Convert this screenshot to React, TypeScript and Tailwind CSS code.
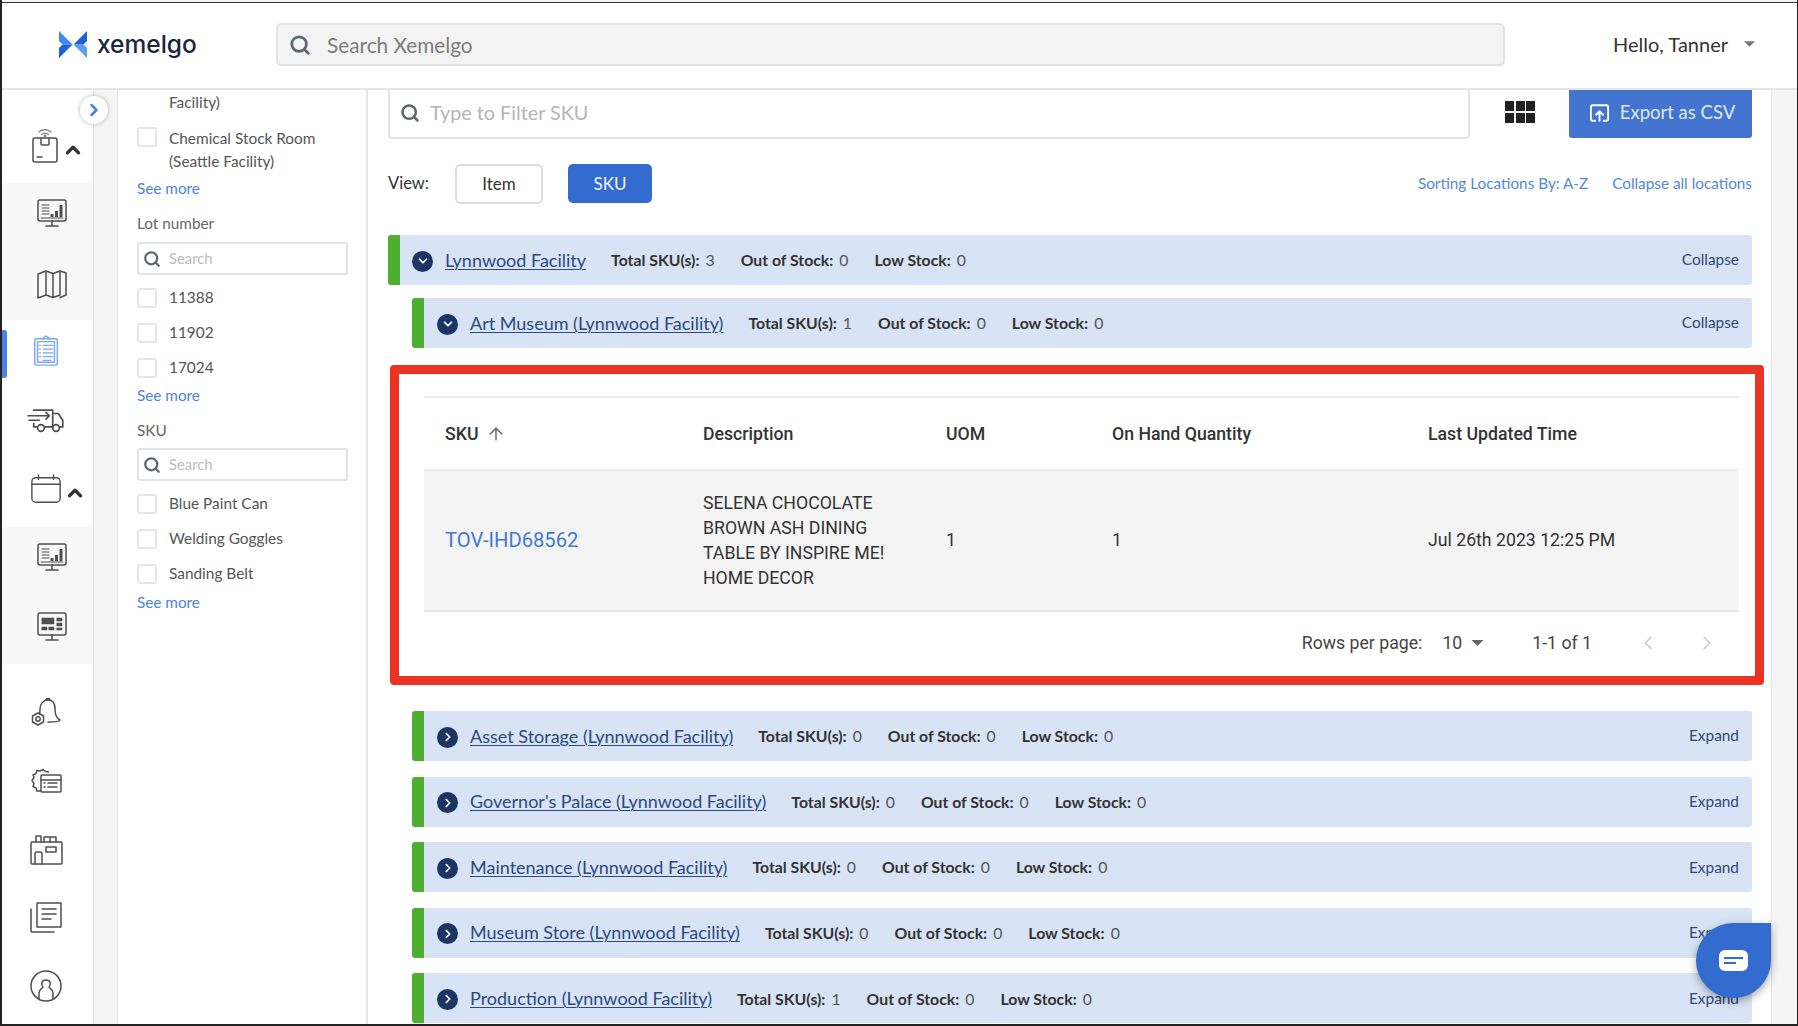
import React from 'react'
import { Search, ChevronRight, ChevronLeft, ChevronDown, ChevronUp, ArrowUp } from 'lucide-react'

const lato = { fontFamily: 'Lato, sans-serif' }

const Caret = ({ className }: { className: string }) => (
  <svg viewBox="0 0 10 5" className={className} fill="currentColor">
    <path d="M0 0h10L5 5z" />
  </svg>
)

const Logo = () => (
  <svg viewBox="0 0 28 27" className="w-[28px] h-[27px]">
    <path d="M0 0l13.5 13.5H3.5L0 10z" fill="#3f86ee" />
    <path d="M0 27l13.5-13.5H3.5L0 17z" fill="#1f5fd8" />
    <path d="M28 0L14.5 13.5H24.5L28 10z" fill="#1f5fd8" />
    <path d="M28 27L14.5 13.5H24.5L28 17z" fill="#5a9bf5" />
  </svg>
)

const Icon = ({ children, className = 'w-[34px] h-[34px]', color = '#4f4f4f' }: { children: React.ReactNode; className?: string; color?: string }) => (
  <svg viewBox="0 0 34 34" className={className} fill="none" stroke={color} strokeWidth={1.5} strokeLinecap="round" strokeLinejoin="round">
    {children}
  </svg>
)

const MonitorChart = () => (
  <Icon>
    <rect x="3" y="4" width="28" height="21" rx="2" />
    <path d="M17 25v4M11 30h12" />
    <path d="M7 9h7M7 12h7M7 15h7M7 18h7" strokeWidth={1} />
    <path d="M17 21v-3M21.5 21v-6M26 21V9" strokeWidth={3} strokeLinecap="butt" />
    <path d="M6 22h22" strokeWidth={1} />
  </Icon>
)

const MonitorBoard = () => (
  <Icon>
    <rect x="3" y="3" width="28" height="22" rx="2" />
    <path d="M17 25v4M11 30h12" />
    <path d="M7 8h12v6H7zM22 8h5v3h-5zM22 13h5v3h-5zM7 17h5v3H7zM14 17h5v3h-5zM22 18h5v2h-5z" fill="#4f4f4f" strokeWidth={0.5} />
  </Icon>
)

const SidebarRow = ({ children, className = '' }: { children: React.ReactNode; className?: string }) => (
  <div className={`h-[68px] flex items-center justify-center ${className}`}>{children}</div>
)

const GraySection = ({ children }: { children: React.ReactNode }) => (
  <div className="bg-[#f8f8f8] h-[137px] pl-[8px] pt-[1px] flex flex-col">
    <div className="mt-[-6px]">{children}</div>
  </div>
)

const Sidebar = () => (
  <div className="w-[91px] shrink-0 bg-white flex flex-col">
    <div className="h-[93px] flex items-end pb-[19px] pl-[28px] gap-[2px]">
      <svg viewBox="0 0 30 36" className="w-[30px] h-[36px]" fill="none" stroke="#4f4f4f" strokeWidth={1.5} strokeLinejoin="round" strokeLinecap="round">
        <path d="M9 4c3.5-3 8.5-3 12 0M11.5 6.5c2-1.5 5-1.5 7 0" stroke="#8a8a8a" />
        <circle cx="15" cy="8" r="0.8" fill="#8a8a8a" stroke="#8a8a8a" />
        <rect x="3" y="10" width="24" height="24" rx="2" />
        <path d="M11 10v6a1 1 0 001 1h6a1 1 0 001-1v-6M7 29h5" />
      </svg>
      <ChevronUp className="w-[22px] h-[22px] mb-[3px] text-[#333]" strokeWidth={3.5} />
    </div>
    <GraySection>
      <SidebarRow className="h-[70px]"><MonitorChart /></SidebarRow>
      <SidebarRow className="h-[70px]">
        <Icon>
          <path d="M3 8l8-3v24l-8 3zM11 5l7 2.5v24L11 29zM18 7.5L25 5v24l-7 2.5zM25 5l6 2v22l-6 2.5" />
        </Icon>
      </SidebarRow>
    </GraySection>
    <SidebarRow className="relative h-[66px] pr-[4px] pb-[6px]">
      <div className="absolute left-0 top-[10px] w-[5px] h-[48px] bg-[#4a80ea] rounded-r-[3px]" />
      <Icon className="w-[32px] h-[36px]" color="#7ba6f3">
        <rect x="5" y="4" width="24" height="28" rx="1.5" />
        <rect x="8" y="7" width="18" height="22" />
        <path d="M13 4l4-3 4 3M14 11h10M14 15h10M14 19h10M14 23h10M14 27h8M10 11h1M10 15h1M10 19h1M10 23h1" />
      </Icon>
    </SidebarRow>
    <SidebarRow className="pr-[4px] pb-[8px]">
      <Icon className="w-[38px] h-[38px]">
        <path d="M6 10h17v15H16M23 13h5l4 6v6h-3M23 25h-0" />
        <circle cx="12.5" cy="26" r="3" />
        <circle cx="26" cy="26" r="3" />
        <path d="M1 15h19M17 12l3 3-3 3M2 19h9M6 22v3h3" />
      </Icon>
    </SidebarRow>
    <div className="h-[71px] flex items-center pl-[28px] pb-[4px]">
      <Icon className="w-[32px] h-[32px] mt-[-2px]">
        <rect x="2" y="5" width="30" height="26" rx="4" />
        <path d="M2 12h30M9 2v5M25 2v5" />
      </Icon>
      <ChevronUp className="w-[22px] h-[22px] ml-[2px] mt-[6px] text-[#333]" strokeWidth={3.5} />
    </div>
    <GraySection>
      <SidebarRow className="h-[70px]"><MonitorChart /></SidebarRow>
      <SidebarRow className="h-[70px]"><MonitorBoard /></SidebarRow>
    </GraySection>
    <div className="pt-[16px] pr-[4px]">
      <SidebarRow>
        <Icon>
          <path d="M19 3c-5 0-8 4-8 9 0 2 0 3-.5 5M19 3c5 0 7 4 7 9 0 6 1 9 5 11 0 2-8 2-12 2M17 3c0-2 4-2 4 0" />
          <path d="M9 16l5.5 3v6L9 28l-5.5-3v-6z" />
          <circle cx="9" cy="22" r="2.2" />
        </Icon>
      </SidebarRow>
      <SidebarRow>
        <Icon>
          <path d="M12 26H8l-1-3-3-1.5 1-3-2-3 2-3-1-2.5 3-1.5 1-3 3 .5 3-1.5 2.5 2 3 .5" />
          <rect x="12" y="10" width="20" height="17" rx="1" />
          <path d="M12 15h20M19 18h9M19 22h9M15 18h1M15 22h1" />
        </Icon>
      </SidebarRow>
      <SidebarRow>
        <Icon>
          <rect x="2" y="9" width="31" height="22" rx="1" />
          <path d="M7 9V3h5v6M15 9V4h6v5M21 4h6v5" />
          <path d="M6 31V21a2 2 0 012-2h3a2 2 0 012 2v10" />
          <rect x="17" y="14" width="10" height="5" />
        </Icon>
      </SidebarRow>
      <SidebarRow>
        <Icon>
          <rect x="8" y="2" width="24" height="24" />
          <path d="M13 8h14M13 13h14M13 18h9" />
          <path d="M2 8v22a1 1 0 001 1h22" />
        </Icon>
      </SidebarRow>
      <SidebarRow>
        <Icon>
          <circle cx="17" cy="17" r="15" />
          <path d="M10 30v-6c0-4 3-4 4-6-2-2-2-7 3-7s5 5 3 7c1 2 4 2 4 6v6" />
        </Icon>
      </SidebarRow>
    </div>
  </div>
)

const Check = ({ label, lines }: { label: string; lines?: string }) => (
  <div className={`flex gap-[12px] ${lines ? 'h-[50px] items-start' : 'h-[35px] items-center'}`}>
    <div className="w-[20px] h-[20px] shrink-0 border-2 border-[#e6e6e6] rounded-[3px] bg-white" />
    <div className="text-[15.4px] leading-[23px] text-[#555] whitespace-nowrap">
      {label}
      {lines && <div>{lines}</div>}
    </div>
  </div>
)

const SeeMore = () => <div className="text-[15.3px] leading-[22px] text-[#4c82e2]">See more</div>

const FilterSearch = () => (
  <div className="mt-[7px] mb-[5px] w-[211px] h-[33px] border-2 border-[#e3e3e3] rounded-[3px] flex items-center pl-[4px] gap-[8px]">
    <Search className="w-[18px] h-[18px] text-[#5d6770]" strokeWidth={3} />
    <span className="text-[14.8px] text-[#bbbbbb]">Search</span>
  </div>
)

const FilterPanel = () => (
  <div className="w-[250px] shrink-0 bg-white border-r-2 border-[#e6e6e6] pl-[19px] flex flex-col" style={lato}>
    <div className="pl-[32px] pt-[1px] h-[37px] text-[15.4px] leading-[23px] text-[#555]">Facility)</div>
    <Check label="Chemical Stock Room" lines="(Seattle Facility)" />
    <div><SeeMore /></div>
    <div className="mt-[13px] text-[15.3px] leading-[22px] text-[#666]">Lot number</div>
    <div className="mt-[1px]"><FilterSearch /></div>
    <Check label="11388" />
    <Check label="11902" />
    <Check label="17024" />
    <div className="mt-[-1px]"><SeeMore /></div>
    <div className="mt-[13px] text-[15.3px] leading-[22px] text-[#666]">SKU</div>
    <FilterSearch />
    <Check label="Blue Paint Can" />
    <Check label="Welding Goggles" />
    <Check label="Sanding Belt" />
    <div><SeeMore /></div>
  </div>
)

const Stat = ({ label, value }: { label: string; value: number }) => (
  <div className="flex items-center gap-[6px] text-[15.8px] text-[#333]">
    <span className="font-bold">{label}</span>
    <span className="text-[#555]">{value}</span>
  </div>
)

const LocationRow = ({
  name,
  total,
  open = false,
  nested = true,
  className = '',
}: {
  name: string
  total: number
  open?: boolean
  nested?: boolean
  className?: string
}) => (
  <div className={`h-[50px] flex rounded-[3px] overflow-hidden bg-[#d8e3f5] ${nested ? 'ml-[24px]' : ''} ${className}`} style={lato}>
    <div className="w-[12px] bg-[#4fae32] shrink-0" />
    <div className={`flex-1 flex items-center pr-[13px] ${nested ? 'pl-[13px]' : 'pl-[12px]'}`}>
      <div className="w-[21px] h-[21px] rounded-full bg-[#1d3565] flex items-center justify-center shrink-0 mt-[2px]">
        {open ? (
          <ChevronDown className="w-[14px] h-[14px] text-white" strokeWidth={3} />
        ) : (
          <ChevronRight className="w-[14px] h-[14px] text-white" strokeWidth={3} />
        )}
      </div>
      <a className="ml-[12px] text-[18px] text-[#2a4a80] underline underline-offset-2 decoration-1">{name}</a>
      <div className="ml-[25px] flex items-center gap-[26px]">
        <Stat label="Total SKU(s):" value={total} />
        <Stat label="Out of Stock:" value={0} />
        <Stat label="Low Stock:" value={0} />
      </div>
      <div className="ml-auto text-[15.4px] text-[#2f4a78]">{open ? 'Collapse' : 'Expand'}</div>
    </div>
  </div>
)

const SkuTable = () => (
  <div className="mt-[17px] ml-[2px] mr-[-12px] h-[320px] border-[9px] border-[#ec3323] rounded-[4px] pt-[22px] pl-[25px] pr-[16px] bg-white" style={{ fontFamily: 'Roboto, sans-serif' }}>
    <div className="border-t-2 border-[#ececec]">
      <div className="h-[73px] pt-[2px] grid grid-cols-[258px_243px_166px_316px_1fr] pl-[21px] items-center border-b-2 border-[#ececec] text-[17.7px] font-medium text-[#333]">
        <div className="flex items-center gap-[8px]">
          SKU <ArrowUp className="w-[20px] h-[20px] text-[#666]" strokeWidth={1.75} />
        </div>
        <div>Description</div>
        <div>UOM</div>
        <div>On Hand Quantity</div>
        <div>Last Updated Time</div>
      </div>
      <div className="h-[141px] grid grid-cols-[258px_243px_166px_316px_1fr] pl-[21px] items-center bg-[#f4f4f4] border-b-2 border-[#e8e8e8] text-[17.7px] text-[#333]">
        <div className="text-[20.2px] text-[#3f78d6]">TOV-IHD68562</div>
        <div className="leading-[25px] w-[190px]">SELENA CHOCOLATE BROWN ASH DINING TABLE BY INSPIRE ME! HOME DECOR</div>
        <div>1</div>
        <div>1</div>
        <div>Jul 26th 2023 12:25 PM</div>
      </div>
      <div className="h-[63px] flex items-center text-[17.7px] text-[#444]">
        <div className="ml-auto flex items-center">
          <span>Rows per page:</span>
          <span className="ml-[20px]">10</span>
          <Caret className="ml-[9px] w-[13px] h-[6px] text-[#666]" />
          <span className="ml-[48px]">1-1 of 1</span>
          <ChevronLeft className="ml-[45px] w-[22px] h-[22px] text-[#c8c8c8]" strokeWidth={1.75} />
          <ChevronRight className="ml-[37px] mr-[21px] w-[22px] h-[22px] text-[#c8c8c8]" strokeWidth={1.75} />
        </div>
      </div>
    </div>
  </div>
)

const Main = () => (
  <div className="flex-1 min-w-0 bg-white pl-[20px] pr-[19px]" style={lato}>
    <div className="flex items-start">
      <div className="w-[1082px] h-[49px] pb-[2px] border-2 border-t-0 border-[#e4e4e4] rounded-b-[4px] flex items-center pl-[10px] gap-[10px]">
        <Search className="w-[20px] h-[20px] text-[#5d6770]" strokeWidth={3} />
        <span className="text-[19.8px] text-[#b5b5b5]">Type to Filter SKU</span>
      </div>
      <div className="ml-[35px] mt-[11px] w-[30px] h-[22px] grid grid-cols-3 grid-rows-2 gap-[1.5px]">
        {[0, 1, 2, 3, 4, 5].map((i) => (
          <div key={i} className="bg-[#222]" />
        ))}
      </div>
      <div className="ml-auto w-[183px] h-[48px] pl-[4px] pb-[2px] bg-[#4274d0] rounded-b-[3px] flex items-center justify-center gap-[11px] text-white text-[18.5px]">
        <svg viewBox="0 0 22 20" className="w-[19px] h-[18px]" fill="none" stroke="#fff" strokeWidth={2.2} strokeLinecap="round" strokeLinejoin="round">
          <path d="M6 19H3a2 2 0 01-2-2V3a2 2 0 012-2h16a2 2 0 012 2v14a2 2 0 01-2 2h-3" />
          <path d="M11 19V9M7 12l4-4 4 4" />
        </svg>
        <span className="text-[#dfe8f9]">Export as CSV</span>
      </div>
    </div>
    <div className="mt-[24.5px] h-[40px] flex items-center">
      <span className="w-[67px] text-[16.5px] text-[#333]">View:</span>
      <div className="w-[88px] h-[40px] border-2 border-[#dcdcdc] rounded-[6px] flex items-center justify-center text-[17px] text-[#333]">Item</div>
      <div className="ml-[25px] w-[84px] h-[39px] bg-[#346bcf] rounded-[5px] flex items-center justify-center text-[17px] text-[#f2f5fc]">SKU</div>
      <div className="ml-auto flex gap-[24px] text-[15.3px] text-[#5488d8]">
        <span>Sorting Locations By: A-Z</span>
        <span>Collapse all locations</span>
      </div>
    </div>
    <LocationRow className="mt-[31.5px]" name="Lynnwood Facility" total={3} open nested={false} />
    <LocationRow className="mt-[13px]" name="Art Museum (Lynnwood Facility)" total={1} open />
    <SkuTable />
    <LocationRow className="mt-[26px]" name="Asset Storage (Lynnwood Facility)" total={0} />
    <LocationRow className="mt-[15.6px]" name="Governor's Palace (Lynnwood Facility)" total={0} />
    <LocationRow className="mt-[15.6px]" name="Maintenance (Lynnwood Facility)" total={0} />
    <LocationRow className="mt-[15.6px]" name="Museum Store (Lynnwood Facility)" total={0} />
    <LocationRow className="mt-[15.6px]" name="Production (Lynnwood Facility)" total={1} />
  </div>
)

const App = () => {
  return (
    <div className="relative w-[1798px] h-[1026px] overflow-hidden bg-white flex flex-col border-l-2 border-r border-[#222]" style={lato}>
      <div className="h-[3px] shrink-0 bg-[#f4f4f4] border-b border-[#333]" />
      <div className="h-[87px] shrink-0 bg-white border-b-2 border-[#e6e6e6] flex items-center pl-[57px] pr-[42px] pb-[2px]">
        <div className="w-[217px] flex items-center gap-[10px] shrink-0">
          <Logo />
          <span className="text-[24.5px] leading-none font-medium text-[#1c2540]" style={{ fontFamily: 'Inter, sans-serif' }}>xemelgo</span>
        </div>
        <div className="w-[1229px] h-[43px] bg-[#f3f3f3] border-2 border-[#dfe3e6] rounded-[5px] flex items-center pl-[11px] gap-[16px]">
          <Search className="w-[22px] h-[22px] text-[#5d6770]" strokeWidth={3} />
          <span className="text-[20.8px] text-[#7d7d7d]">Search Xemelgo</span>
        </div>
        <div className="ml-auto flex items-center gap-[16px] mt-[-1px]">
          <span className="text-[20px] text-[#333]">Hello, Tanner</span>
          <Caret className="w-[11px] h-[6px] text-[#777]" />
        </div>
      </div>
      <div className="flex-1 min-h-0 flex">
        <Sidebar />
        <div className="w-[25px] shrink-0 bg-[#f5f5f5] border-l border-r border-[#e2e2e2]" />
        <FilterPanel />
        <Main />
        <div className="w-[26px] shrink-0 bg-[#f5f5f5] border-l border-[#e4e4e4]" />
      </div>
      <div className="h-[2px] shrink-0 bg-[#222]" />

      <div className="absolute left-[78px] top-[96px] w-[28px] h-[28px] rounded-full bg-white shadow-[0_0_4px_rgba(0,0,0,0.3)] flex items-center justify-center">
        <ChevronRight className="w-[20px] h-[20px] text-[#4a80ea]" strokeWidth={3} />
      </div>
      <div className="absolute left-[1694px] top-[923px] w-[75px] h-[75px] bg-[#336bcf] rounded-full rounded-tr-[8px] shadow-[0_3px_8px_rgba(0,0,0,0.35)] flex items-center justify-center">
        <div className="w-[29px] h-[21px] bg-white rounded-[6px] flex flex-col justify-center pl-[5px] gap-[3px]">
          <div className="w-[19px] h-[2px] bg-[#336bcf]" />
          <div className="w-[12px] h-[2px] bg-[#336bcf]" />
        </div>
      </div>
    </div>
  )
}

export default App
